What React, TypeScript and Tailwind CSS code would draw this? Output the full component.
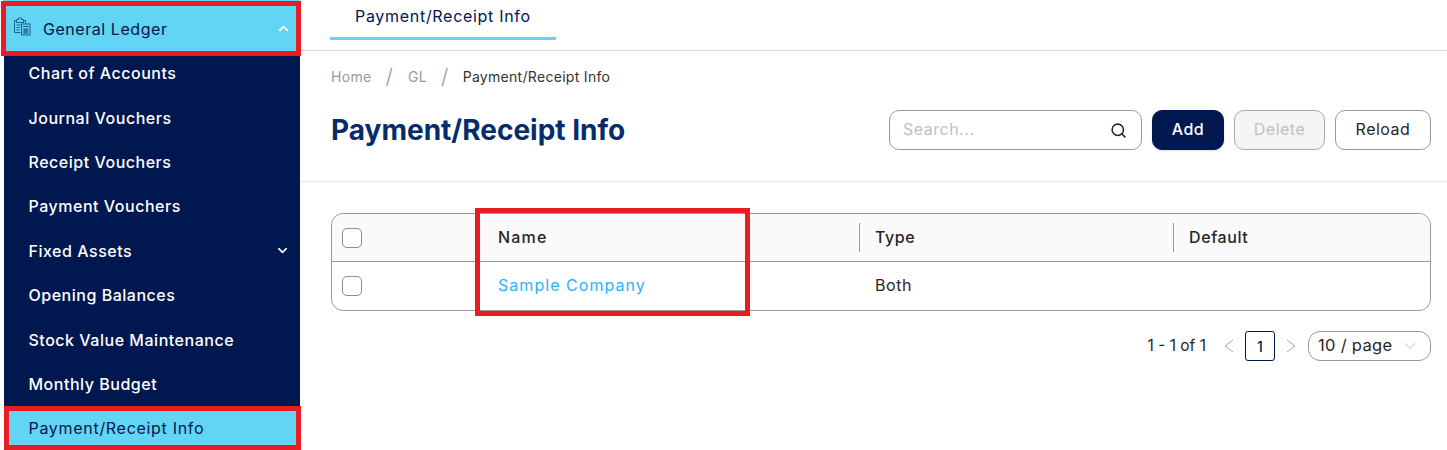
import React from "react";
import { ChevronDown, ChevronUp, Search } from "lucide-react";

const font = { fontFamily: '"Inter", "Open Sans", sans-serif' };

const menuItems = [
  "Chart of Accounts",
  "Journal Vouchers",
  "Receipt Vouchers",
  "Payment Vouchers",
  "Fixed Assets",
  "Opening Balances",
  "Stock Value Maintenance",
  "Monthly Budget",
];

function LedgerIcon() {
  return (
    <svg width="18" height="20" viewBox="0 0 18 20" fill="none" stroke="#1f5f8f" strokeWidth="1" className="-translate-y-[2px]">
      <path d="M3.5 2.5h2v-1.5h3v1.5h2v3h-7zM3.5 3.5h-2v12h6" />
      <path d="M10.5 3.500h2v3" />
      <path d="M3.500 8h4M3.500 10.500h3M3.500 13h3" />
      <rect x="8.500" y="7" width="8.500" height="11" />
      <path d="M10 9.500h5.500M10 12h5.500M10 14h5.500M10 16h5.500M11.800 12v4.500M13.700 12v4.500" />
    </svg>
  );
}

function PagerArrow({ flip }: { flip?: boolean }) {
  return (
    <svg width="10" height="14" viewBox="0 0 10 14" fill="none" stroke="#a6a6a6" strokeWidth="1">
      <path d={flip ? "M1 1l8 6-8 6" : "M9 1L1 7l8 6"} />
    </svg>
  );
}

function Sidebar() {
  return (
    <aside className="relative h-[450px] w-[301px] shrink-0 pl-1 pr-px">
      <div className="h-full bg-[#00174f]">
        <div className="-ml-[1px] flex h-[51px] items-center bg-[#62d4f4] pl-[10px] pr-[9px] pt-[6px]">
          <LedgerIcon />
          <span className="ml-[12px] text-[16px] tracking-[0.55px] text-[#00174f]">General Ledger</span>
          <ChevronUp className="ml-auto text-white" size={15} strokeWidth={3} />
        </div>
        <div>
          {menuItems.map((item) => (
            <div key={item} className="flex h-[44.400px] items-center justify-between pl-[24.500px] pr-[10px] text-[16px] font-medium tracking-[0.52px] text-white">
              <span>{item}</span>
              {item === "Fixed Assets" && <ChevronDown size={15} strokeWidth={2.500} />}
            </div>
          ))}
          <div className="flex h-[44px] items-center bg-[#62d4f4] pl-[24.500px] text-[16px] tracking-[0.7px] text-[#00174f]">
            Payment/Receipt Info
          </div>
        </div>
      </div>
      <div className="absolute left-[1px] top-[1px] h-[55px] w-[300px] border-[5px] border-[#e91c24]" />
      <div className="absolute left-[4px] top-[406px] h-[44px] w-[297px] border-[5px] border-[#e91c24]" />
    </aside>
  );
}

function Checkbox() {
  return <div className="h-5 w-5 rounded-[5px] border border-[#8c8c8c] bg-white" />;
}

function Main() {
  return (
    <main className="min-w-0 flex-1">
      <div className="h-[51px] border-b border-[#d9d9d9] pl-[29px]">
        <div className="h-[40px] w-[226px] border-b-[3px] border-[#62d4f4] pl-[25px] pt-[4px] text-[16px] tracking-[0.7px] text-[#00174f]">
          Payment/Receipt Info
        </div>
      </div>

      <div className="flex h-[132px] flex-col border-b-[3px] border-[#f3f3f3] pl-[30px] pr-4">
        <div className="flex items-center pt-[17px] text-[14px] leading-[18px] tracking-[0.3px] text-[#9a9a9a]">
          <span>Home</span>
          <span className="ml-[14px] text-[21px] font-light">/</span>
          <span className="ml-[15px]">GL</span>
          <span className="ml-[14px] text-[21px] font-light">/</span>
          <span className="ml-[14px] text-[#333]">Payment/Receipt Info</span>
        </div>
        <div className="mt-[23px] flex items-center justify-between">
          <h1 className="text-[28px] font-bold text-[#062c6b]">Payment/Receipt Info</h1>
          <div className="flex items-center gap-[10px] text-[16px] tracking-[0.5px]">
            <div className="flex h-10 w-[253px] items-center justify-between rounded-[10px] border border-[#999] pl-[13px] pr-[14px]">
              <span className="pb-[2px] text-[#bfbfbf]">Search...</span>
              <Search size={17} strokeWidth={2.200} className="text-[#222]" />
            </div>
            <button className="h-10 w-[72px] rounded-[10px] border border-[#00174f] bg-[#00174f] pb-[2px] font-medium text-white shadow-sm">Add</button>
            <button className="h-10 w-[91px] rounded-[10px] border border-[#aaa] bg-[#f5f5f5] pb-[2px] text-[#bfbfbf]">Delete</button>
            <button className="h-10 w-[96px] rounded-[10px] border border-[#999] bg-white pb-[2px] text-[#262626]">Reload</button>
          </div>
        </div>
      </div>

      <div className="pl-[30px] pr-4 pt-[30px]">
        <div className="relative">
          <div className="rounded-[12px] border border-[#999] text-[16px] tracking-[0.6px]">
            <div className="grid h-[48px] grid-cols-[166px_361px_314px_1fr] items-center rounded-t-[12px] border-b border-[#999] bg-[#fafafa] font-medium text-[#262626]">
              <div className="pl-[10px]"><Checkbox /></div>
              <div className="pb-[2px] tracking-[1.200px]">Name</div>
              <div className="flex h-[29px] items-center border-l border-[#999] pb-[2px] pl-[15px]">Type</div>
              <div className="flex h-[29px] items-center border-l border-[#999] pb-[2px] pl-[15px]">Default</div>
            </div>
            <div className="grid h-[48px] grid-cols-[166px_361px_314px_1fr] items-center text-[#262626]">
              <div className="pl-[10px]"><Checkbox /></div>
              <div className="pb-[2px] tracking-[1.050px] text-[#2db2ff]">Sample Company</div>
              <div className="pb-[2px] pl-[16px]">Both</div>
              <div />
            </div>
          </div>
          <div className="absolute left-[144px] top-[-5px] h-[108px] w-[275px] border-[5px] border-[#e91c24]" />
        </div>

        <div className="mt-[20px] flex items-center justify-end text-[15.500px] text-[#262626]">
          <span>1 - 1 of 1</span>
          <div className="ml-[18px]"><PagerArrow /></div>
          <div className="ml-[11px] flex h-[30px] w-[30px] items-center justify-center rounded-[3px] border border-[#00174f] text-[14px] font-medium text-[#00174f]">1</div>
          <div className="ml-[11px]"><PagerArrow flip /></div>
          <div className="ml-[12px] flex h-[30px] w-[123px] items-center justify-between rounded-[12px] border border-[#999] pl-[9px] pr-[10px] text-[16.500px] tracking-[0.3px]">
            <span className="pb-[1px]">10 / page</span>
            <ChevronDown size={20} strokeWidth={0.9} className="text-[#aaa]" />
          </div>
        </div>
      </div>
    </main>
  );
}

export default function App() {
  return (
    <div className="flex h-[450px] w-[1447px] overflow-hidden bg-white" style={font}>
      <Sidebar />
      <Main />
    </div>
  );
}
